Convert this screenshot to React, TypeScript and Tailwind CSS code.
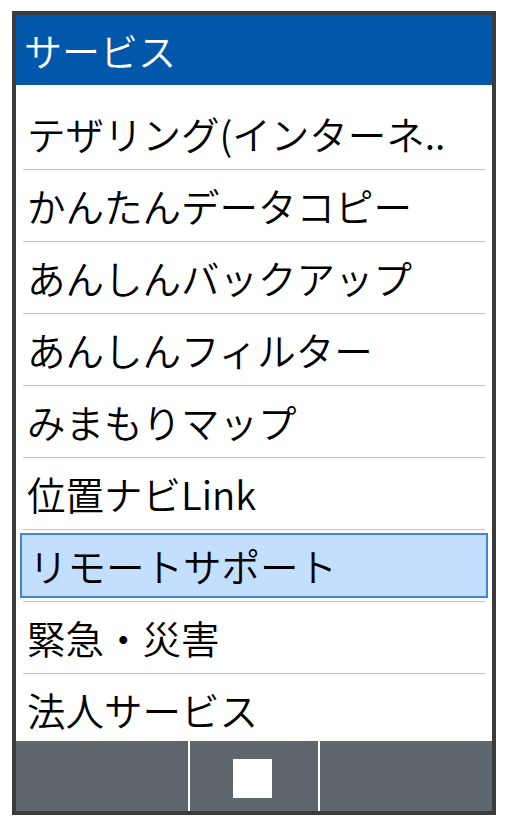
import React from "react";

const items = [
  "テザリング(インターネ..",
  "かんたんデータコピー",
  "あんしんバックアップ",
  "あんしんフィルター",
  "みまもりマップ",
  "位置ナビLink",
  "リモートサポート",
  "緊急・災害",
  "法人サービス",
];

export default function App() {
  return (
    <div
      className="w-[507px] h-[826px] bg-white pt-[11px] pl-[12px]"
      style={{ fontFamily: '"Noto Sans CJK JP", "Noto Sans", sans-serif' }}
    >
      <div className="w-[484px] h-[804px] border-4 border-[#3c3c3c] flex flex-col overflow-hidden">
        <div className="h-[70px] shrink-0 bg-[#0157a9] flex items-center pl-[8px]">
          <span className="text-white text-[38px] font-[350] leading-none">サービス</span>
        </div>
        <div className="flex-1 overflow-hidden pt-[13px] bg-white">
          {items.map((t, i) => (
            <div key={i}>
              {i === 6 ? (
                <div className="h-[71px] px-[4px] py-[3px]">
                  <div className="h-full bg-[#c4dffd] border-2 border-[#3a86df] flex items-center pl-[7px]">
                    <span className="text-[38.5px] font-[350] leading-none text-black">{t}</span>
                  </div>
                </div>
              ) : (
                <div className="h-[71px] flex items-center pl-[11px]">
                  <span className="text-[38.5px] font-[350] leading-none text-black whitespace-nowrap">{t}</span>
                </div>
              )}
              <div className="mx-[7px] h-px bg-[#c2c2c2]" />
            </div>
          ))}
        </div>
        <div className="h-[70px] shrink-0 bg-[#5f676e] flex">
          <div className="w-[172px] h-full" />
          <div className="w-[2px] h-full bg-white" />
          <div className="w-[128px] h-full flex items-center justify-center">
            <div className="w-[39px] h-[39px] bg-white mt-[5px] -ml-[3px]" />
          </div>
          <div className="w-[2px] h-full bg-white" />
          <div className="flex-1 h-full" />
        </div>
      </div>
    </div>
  );
}
